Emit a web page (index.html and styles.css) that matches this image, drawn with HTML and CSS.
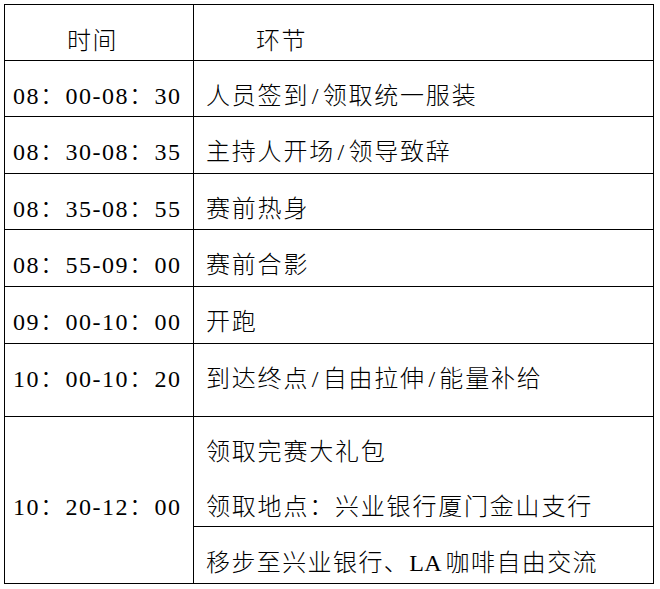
FILE: index.html
```html
<!DOCTYPE html>
<html lang="zh-CN">
<head>
<meta charset="utf-8">
<title>活动流程</title>
<link rel="stylesheet" href="styles.css">
</head>
<body>
<div class="schedule">
  <div class="cell head">时间</div>
  <div class="cell head">环节</div>

  <div class="cell time">08：00-08：30</div>
  <div class="cell item">人员签到<span class="sl">/</span>领取统一服装</div>

  <div class="cell time">08：30-08：35</div>
  <div class="cell item">主持人开场<span class="sl">/</span>领导致辞</div>

  <div class="cell time">08：35-08：55</div>
  <div class="cell item">赛前热身</div>

  <div class="cell time">08：55-09：00</div>
  <div class="cell item">赛前合影</div>

  <div class="cell time">09：00-10：00</div>
  <div class="cell item">开跑</div>

  <div class="cell time">10：00-10：20</div>
  <div class="cell item">到达终点<span class="sl">/</span>自由拉伸<span class="sl">/</span>能量补给</div>

  <div class="cell time centered">10：20-12：00</div>
  <div class="cell split">
    <div class="sub first">
      <p class="line">领取完赛大礼包</p>
      <p class="line">领取地点：兴业银行厦门金山支行</p>
    </div>
    <div class="sub last">
      <p class="line">移步至兴业银行、<span class="latin">LA</span> 咖啡自由交流</p>
    </div>
  </div>
</div>
</body>
</html>
```

FILE: styles.css
```css
* { box-sizing: border-box; }

html, body {
  margin: 0;
  padding: 0;
  background: #ffffff;
}

body {
  font-family: "Liberation Serif", "Noto Sans CJK SC", serif;
  font-size: 24px;
  color: #000000;
}

.schedule {
  margin: 4px 0 0 4px;
  width: 650px;
  display: grid;
  grid-template-columns: 189px 460px;
  grid-template-rows: 56px 56px 57px 56px 57px 57px 73px 167px;
  border-top: 1px solid #000;
  border-left: 1px solid #000;
}

.cell {
  border-right: 1px solid #000;
  border-bottom: 1px solid #000;
  letter-spacing: 1.5px;
  line-height: 24px;
  padding-top: 23px;
  white-space: nowrap;
  font-weight: 300;
}

.head {
  padding-left: 62px;
  padding-top: 24px;
}

.time {
  padding-left: 8px;
}

.item,
.split {
  letter-spacing: 1.8px;
}

.item {
  padding-left: 12px;
}

.sl {
  margin: 0 2.5px;
}

.latin {
  letter-spacing: 0.5px;
}

.centered {
  display: flex;
  align-items: center;
  padding-top: 13px;
  padding-bottom: 0;
}

.split {
  padding: 0;
  display: flex;
  flex-direction: column;
}

.sub {
  padding-left: 12px;
}

.sub.first {
  height: 110px;
  border-bottom: 1px solid #000;
  padding-top: 23px;
}

.sub.last {
  flex: 1;
  padding-top: 24px;
  letter-spacing: 1.4px;
  word-spacing: -4px;
}

.line {
  margin: 0;
  height: 55px;
  line-height: 24px;
}
```
